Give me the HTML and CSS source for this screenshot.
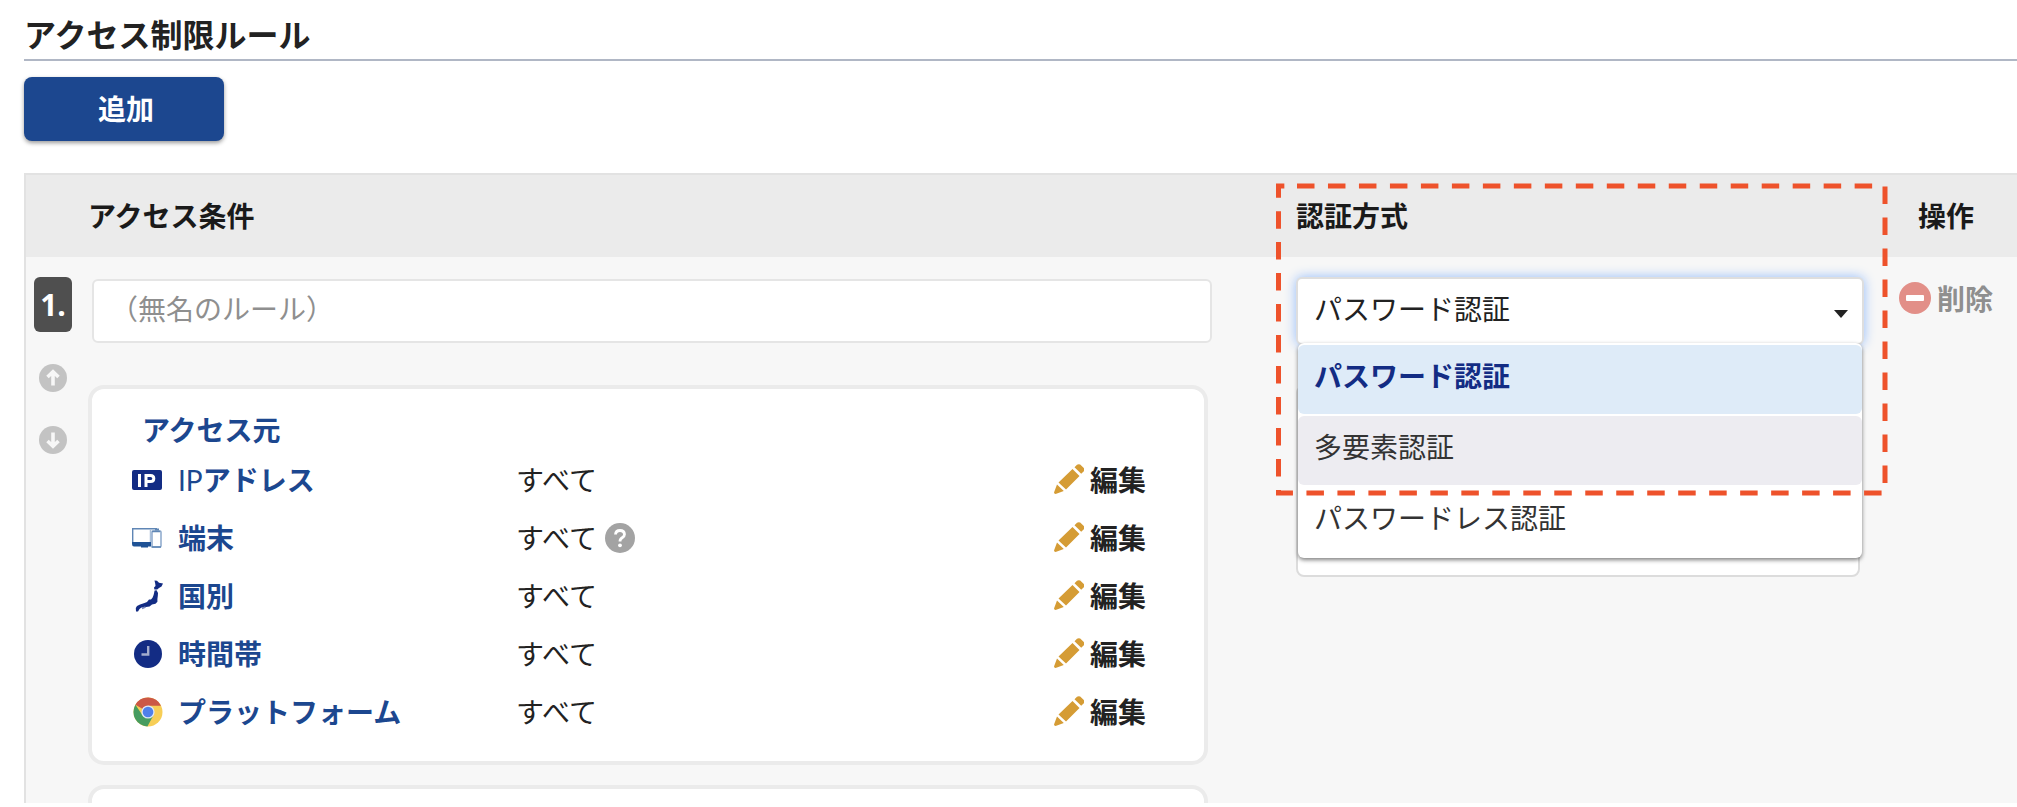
FILE: index.html
```html
<!DOCTYPE html>
<html lang="ja">
<head>
<meta charset="utf-8">
<title>アクセス制限ルール</title>
<link rel="stylesheet" href="styles.css">
</head>
<body>
<svg class="defs" aria-hidden="true">
  <symbol id="pencil" viewBox="0 0 30 30">
    <path fill="#d59c35" d="M4.500 18.500 18.500 5 25.500 12 12 25.500zM20.500 3.200 23 .8Q24.500-.4 26.200.6L29.800 4Q31 6 29.600 7.400L27.200 9.800zM3 20.500 9.800 27 1.600 30Q0 30 0 28.600z"/>
  </symbol>
</svg>

<h1 class="title">アクセス制限ルール</h1>
<button class="add" type="button">追加</button>

<div class="rules">
  <table class="rules-table">
    <colgroup><col class="col-no"><col><col class="col-auth"><col class="col-action"></colgroup>
    <thead>
      <tr>
        <th scope="col" aria-label="番号"></th>
        <th scope="col">アクセス条件</th>
        <th scope="col" class="auth-head">認証方式
          <svg class="highlight" viewBox="0 0 614 316" aria-hidden="true">
            <path d="M22 4H610V311H3.500V4Z"/>
          </svg>
        </th>
        <th scope="col" class="action-head">操作</th>
      </tr>
    </thead>
    <tbody>
      <tr>
        <td class="no-cell">
          <div class="order">
            <span class="badge">1.</span>
            <button class="move" type="button" aria-label="上へ">
              <svg viewBox="0 0 28 28"><circle cx="14" cy="14" r="14" fill="#c3c3c3"/><path d="M14 21.500V9M8.500 13 14 7.800 19.500 13" fill="none" stroke="#f7f7f7" stroke-width="3.600"/></svg>
            </button>
            <button class="move" type="button" aria-label="下へ">
              <svg viewBox="0 0 28 28"><circle cx="14" cy="14" r="14" fill="#c3c3c3"/><path d="M14 6.500V19M8.500 15 14 20.200 19.500 15" fill="none" stroke="#f7f7f7" stroke-width="3.600"/></svg>
            </button>
          </div>
        </td>
        <td class="cond-cell">
          <input class="rule-name" type="text" placeholder="（無名のルール）" aria-label="ルール名">
          <section class="card">
            <h2 class="card-title">アクセス元</h2>
            <ul class="conds">
              <li class="cond">
                <svg class="icon" viewBox="0 0 30 30"><rect y="5" width="30" height="20" rx="2" fill="#132c84"/><path d="M7.500 9V22M14 22V10.500H18.500Q21.800 10.500 21.800 13.500T18.500 16.600H14" fill="none" stroke="#fff" stroke-width="3"/></svg>
                <span class="label"><span class="latin">IP</span>アドレス</span>
                <span class="value">すべて</span>
                <button class="edit" type="button"><svg class="icon"><use href="#pencil"/></svg>編集</button>
              </li>
              <li class="cond">
                <svg class="icon" viewBox="0 0 30 30"><path d="M.7 20V5.700H25" fill="none" stroke="#5f86b5" stroke-width="1.400"/><path d="M0 19H19V23.500H16V24.500H9V23.500H2Q0 23.500 0 21z" fill="#1f5396"/><path d="M18.500 6V19" stroke="#a9bfd9" stroke-width="1.500"/><rect x="20" y="8" width="9" height="16" rx="1" fill="#fff" stroke="#83a2c8" stroke-width="1.400"/><path d="M20 8.500H28M19.500 24H29" stroke="#5f86b5" stroke-width="1.600"/><path d="M23 6.500H27" stroke="#5f86b5" stroke-width="2"/></svg>
                <span class="label">端末</span>
                <span class="value">すべて
                  <button class="help" type="button" aria-label="ヘルプ"><svg class="icon" viewBox="0 0 30 30"><circle cx="15" cy="15" r="15" fill="#a3a3a3"/><path d="M10.500 11.500Q10.800 7.500 15 7.500T19.500 11.300Q19.500 13.400 17.200 14.800T15 18.500" fill="none" stroke="#fff" stroke-width="2.800"/><circle cx="15" cy="22.300" r="1.900" fill="#fff"/></svg></button>
                </span>
                <button class="edit" type="button"><svg class="icon"><use href="#pencil"/></svg>編集</button>
              </li>
              <li class="cond">
                <svg class="icon" viewBox="0 0 30 30"><path fill="#132c84" d="M22.500-.5 25-.3 27 1.800 31 2.500 29.500 5.500 27 7 25.200 8.600 22.400 8.600 22 6.500 23.500 5 23.300 3zM22.600 9.500 24.600 9.200 26 12 25.800 15 25.400 18 25.400 20.800 23.500 22.800 20 23.500 17.500 25.500 14 26 12 26.500 9.500 26.500 7.500 28 6 30.500 4 30.500 3.800 27 5 25 8 23.500 12.500 22 15 21 17 18.500 19 18.500 20.500 16.800 21.600 14z"/><path d="M10 27.500 13.500 26" stroke="#7b88ba" stroke-width="1.500"/></svg>
                <span class="label">国別</span>
                <span class="value">すべて</span>
                <button class="edit" type="button"><svg class="icon"><use href="#pencil"/></svg>編集</button>
              </li>
              <li class="cond">
                <svg class="icon" viewBox="0 0 30 30"><circle cx="16" cy="15" r="14" fill="#132c84"/><path d="M16.200 7V15.500H9.500" fill="none" stroke="#a3accd" stroke-width="2.400"/></svg>
                <span class="label">時間帯</span>
                <span class="value">すべて</span>
                <button class="edit" type="button"><svg class="icon"><use href="#pencil"/></svg>編集</button>
              </li>
              <li class="cond">
                <svg class="icon" viewBox="0 0 30 30"><circle cx="16" cy="15" r="14.500" fill="#f7ce56"/><path fill="#cb5846" d="M16 15 3.400 7.800A14.500 14.500 0 0 1 29 8.800H16z"/><path fill="#469c5f" d="M3.400 7.800A14.500 14.500 0 0 0 15.400 29.500L21.500 18.300 16 15 10.500 18.200z"/><circle cx="16" cy="15" r="6.600" fill="#dfe7f5"/><circle cx="16" cy="15" r="5.300" fill="#4f80ea"/></svg>
                <span class="label">プラットフォーム</span>
                <span class="value">すべて</span>
                <button class="edit" type="button"><svg class="icon"><use href="#pencil"/></svg>編集</button>
              </li>
            </ul>
          </section>
          <section class="card"></section>
        </td>
        <td class="auth-cell">
          <div class="picker">
            <select class="auth-select" aria-label="認証方式">
              <option>パスワード認証</option>
              <option>多要素認証</option>
              <option>パスワードレス認証</option>
            </select>
            <svg class="caret" viewBox="0 0 14 8" aria-hidden="true"><path d="M0 0H14L7 8z" fill="#222"/></svg>
            <ul class="menu" role="listbox" aria-label="認証方式">
              <li class="option selected" role="option" aria-selected="true">パスワード認証</li>
              <li class="option hovered" role="option" aria-selected="false">多要素認証</li>
              <li class="option" role="option" aria-selected="false">パスワードレス認証</li>
            </ul>
          </div>
          <div class="auth-panel"></div>
        </td>
        <td class="action-cell">
          <button class="delete" type="button">
            <svg viewBox="0 0 32 32"><circle cx="16" cy="16" r="16" fill="#e28f88"/><rect x="7" y="13" width="18" height="6" rx="1" fill="#fff"/></svg>削除
          </button>
        </td>
      </tr>
    </tbody>
  </table>
</div>
</body>
</html>
```

FILE: styles.css
```css
* {
  box-sizing: border-box;
}

body {
  display: flex;
  flex-direction: column;
  align-items: stretch;
  height: 100vh;
  margin: 0;
  padding: 0 0 4px 24px;
  overflow: hidden;
  background: #fff;
  color: #222;
  font: 28px/40px "Noto Sans CJK JP", sans-serif;
}

button,
input,
select {
  font: inherit;
  color: inherit;
}

button {
  padding: 0;
  border: 0;
  background: none;
  cursor: pointer;
}

svg {
  display: block;
}

ul {
  margin: 0;
  padding: 0;
  list-style: none;
}

.defs {
  position: absolute;
  width: 0;
  height: 0;
}

.title {
  flex: none;
  margin: 0;
  padding: 9px 0 2px;
  border-bottom: 2px solid #b0b7c5;
  font-size: 32px;
  line-height: 48px;
  font-weight: 700;
}

.add {
  flex: none;
  align-self: flex-start;
  width: 200px;
  height: 64px;
  margin: 16px 0 32px;
  padding: 0 0 2px 4px;
  border-radius: 8px;
  background: #1c478f;
  box-shadow: 0 2px 4px rgba(0, 0, 0, 0.4);
  color: #fff;
  font-weight: 700;
}

.rules {
  flex: 1;
  min-height: 0;
  overflow: hidden;
  border-top: 2px solid #e2e2e2;
  border-left: 2px solid #e2e2e2;
  background: #f7f7f7;
}

.rules-table {
  width: 100%;
  table-layout: fixed;
  border-collapse: separate;
  border-spacing: 0;
}

.col-no {
  width: 62px;
}

.col-auth {
  width: 603px;
}

.col-action {
  width: 118px;
}

th {
  height: 82px;
  padding: 0 0 2px;
  background: #ebebeb;
  color: #1a1a1a;
  font-weight: 700;
  text-align: left;
}

td {
  padding: 0;
  vertical-align: top;
}

.auth-head {
  position: relative;
}

.highlight {
  position: absolute;
  z-index: 3;
  top: 7px;
  left: -21px;
  width: 614px;
  height: 316px;
  fill: none;
  stroke: #ee522b;
  stroke-width: 5;
  stroke-dasharray: 17.500 13.480;
  pointer-events: none;
}

.action-head {
  padding-left: 19px;
}

.order {
  display: flex;
  flex-direction: column;
  align-items: center;
  padding: 20px 8px 0 0;
}

.badge {
  width: 38px;
  height: 55px;
  margin-bottom: 32px;
  border-radius: 6px;
  background: #4f4f4f;
  color: #fff;
  font: 700 30px/55px "Open Sans", sans-serif;
  text-align: center;
}

.move {
  width: 28px;
  height: 28px;
  margin-bottom: 34px;
}

.cond-cell {
  padding: 22px 88px 0 0;
}

.rule-name {
  display: block;
  width: 100%;
  height: 64px;
  margin: 0 0 42px;
  padding: 0 16px 6px;
  border: 2px solid #e5e5e5;
  border-radius: 6px;
  background: #fff;
  position: relative;
  left: 4px;
}

.rule-name::placeholder {
  color: #8f8f8f;
  opacity: 1;
}

.card {
  min-height: 120px;
  margin-bottom: 20px;
  padding: 19px 58px 21px 40px;
  border: 4px solid #ebebeb;
  border-radius: 16px;
  background: #fff;
}

.card-title {
  margin: 0;
  padding-left: 10px;
  color: #1c478f;
  font-size: 28px;
  line-height: 42px;
  font-weight: 700;
}

.cond {
  display: grid;
  grid-template-columns: 30px 322px 1fr auto;
  column-gap: 16px;
  align-items: center;
  height: 58px;
}

.icon {
  flex: none;
  width: 30px;
  height: 30px;
  overflow: visible;
}

.cond > .icon,
.help {
  margin-top: 2px;
}

.label {
  color: #1c478f;
  font-weight: 700;
}

.latin {
  font-family: Lato, sans-serif;
  font-weight: 400;
}

.value {
  display: flex;
  align-items: center;
  gap: 8px;
}

.edit {
  display: flex;
  align-items: center;
  gap: 6px;
  font-weight: 700;
}

.auth-cell {
  padding: 20px 35px 0 0;
}

.picker {
  position: relative;
}

.auth-select {
  display: block;
  width: 100%;
  height: 68px;
  padding: 0 48px 6px 16px;
  border: 2px solid #dedede;
  border-radius: 6px;
  outline: 0;
  background: #fff;
  box-shadow: 0 0 12px #94bcfb;
  appearance: none;
}

.caret {
  position: absolute;
  top: 33px;
  right: 16px;
  width: 14px;
  height: 8px;
  pointer-events: none;
}

.menu {
  position: absolute;
  z-index: 2;
  top: 66px;
  left: 2px;
  right: 2px;
  display: grid;
  gap: 2px;
  padding: 2px 0;
  border-radius: 6px;
  background: #fff;
  box-shadow: 0 2px 4px rgba(0, 0, 0, 0.5);
}

.option {
  height: 69px;
  padding: 10px 16px;
  border-radius: 6px;
  color: #333;
}

.selected {
  background: #deebf8;
  color: #132c84;
  font-weight: 700;
}

.hovered {
  background: #edecf1;
}

.auth-panel {
  height: 192px;
  margin: 40px 4px 0 0;
  border: 2px solid #dcdcdc;
  border-radius: 8px;
  background: #fff;
}

.action-cell {
  padding-top: 21px;
}

.delete {
  display: flex;
  align-items: center;
  gap: 6px;
  color: #8f8f8f;
  font-weight: 700;
}

.delete svg {
  width: 32px;
  height: 32px;
}
```
